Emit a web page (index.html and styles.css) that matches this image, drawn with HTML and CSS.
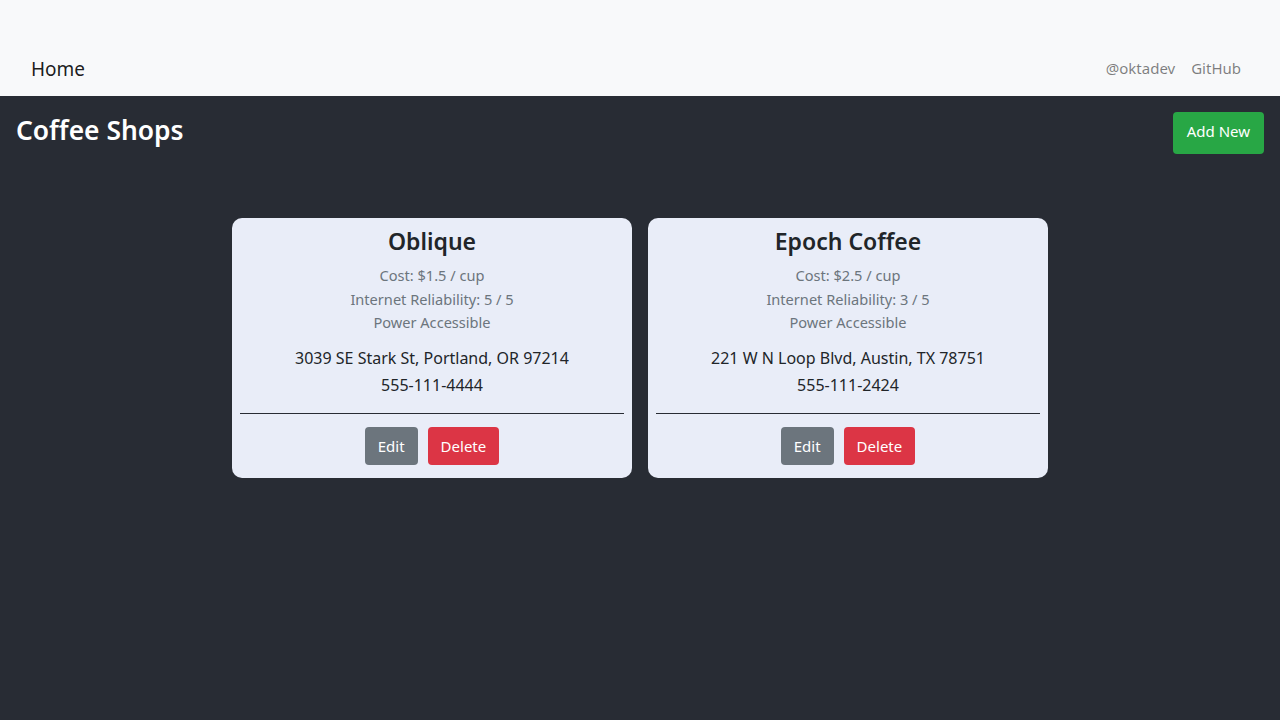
FILE: index.html
```html
<!DOCTYPE html>
<html>
<head>
<meta charset="utf-8">
<link rel="stylesheet" href="styles.css">
</head>
<body>
<nav class="navbar">
  <a class="brand" href="#">Home</a>
  <div class="nav-links">
    <a href="#">@oktadev</a>
    <a href="#">GitHub</a>
  </div>
</nav>
<main class="app">
  <div class="header-row">
    <h2 class="title">Coffee Shops</h2>
    <button class="btn btn-success">Add New</button>
  </div>
  <div class="cards">
    <div class="card">
      <h3 class="card-title">Oblique</h3>
      <div class="meta">
        <div>Cost: $1.5 / cup</div>
        <div>Internet Reliability: 5 / 5</div>
        <div>Power Accessible</div>
      </div>
      <div class="addr">
        <div>3039 SE Stark St, Portland, OR 97214</div>
        <div>555-111-4444</div>
      </div>
      <hr class="sep">
      <div class="actions">
        <button class="btn btn-secondary">Edit</button>
        <button class="btn btn-danger">Delete</button>
      </div>
    </div>
    <div class="card">
      <h3 class="card-title">Epoch Coffee</h3>
      <div class="meta">
        <div>Cost: $2.5 / cup</div>
        <div>Internet Reliability: 3 / 5</div>
        <div>Power Accessible</div>
      </div>
      <div class="addr">
        <div>221 W N Loop Blvd, Austin, TX 78751</div>
        <div>555-111-2424</div>
      </div>
      <hr class="sep">
      <div class="actions">
        <button class="btn btn-secondary">Edit</button>
        <button class="btn btn-danger">Delete</button>
      </div>
    </div>
  </div>
</main>
</body>
</html>
```
FILE: styles.css
```css
* { box-sizing: border-box; }
html, body { height: 100%; }
body {
  margin: 0;
  font-family: "Noto Sans", "Open Sans", sans-serif;
  background: #282c34;
  color: #212529;
}
.navbar {
  height: 96px;
  background: #f8f9fa;
  display: flex;
  justify-content: space-between;
  align-items: flex-end;
  padding: 0 39px 12px 31px;
}
.navbar a { text-decoration: none; }
.brand {
  font-size: 19px;
  color: rgba(0,0,0,.9);
  line-height: 30px;
}
.nav-links { display: flex; gap: 16px; padding-bottom: 4px; }
.nav-links a {
  font-size: 15px;
  color: rgba(0,0,0,.5);
  line-height: 24px;
}
.app { padding: 16px; }
.header-row {
  display: flex;
  justify-content: space-between;
  align-items: flex-start;
}
.title {
  margin: 0;
  color: #fff;
  font-size: 26.4px;
  font-weight: 600;
  line-height: 36px;
}
.btn {
  font-family: inherit;
  border: 0;
  border-radius: 4px;
  color: #fff;
  font-size: 15px;
  cursor: pointer;
}
.btn-success {
  background: #28a745;
  height: 42px;
  padding: 0 14px 4px;
}
.btn-secondary { background: #6c757d; }
.btn-danger { background: #dc3545; }
.cards {
  display: flex;
  justify-content: center;
  gap: 16px;
  margin-top: 64px;
}
.card {
  width: 400px;
  background: #e9edf8;
  border-radius: 10px;
  padding: 8px 8px 13px;
  text-align: center;
}
.card-title {
  margin: 0;
  font-size: 23px;
  font-weight: 600;
  line-height: 30px;
  color: #212529;
}
.meta {
  margin-top: 8px;
  color: #6c757d;
  font-size: 14.6px;
  line-height: 23.5px;
}
.addr {
  margin-top: 10px;
  font-size: 16px;
  line-height: 27px;
  color: #212529;
}
.sep {
  margin: 14px 0 13px;
  border: 0;
  border-top: 1px solid #282c34;
}
.actions {
  display: flex;
  justify-content: center;
  gap: 10px;
}
.actions .btn {
  height: 38px;
  padding: 0 13px;
}
```
